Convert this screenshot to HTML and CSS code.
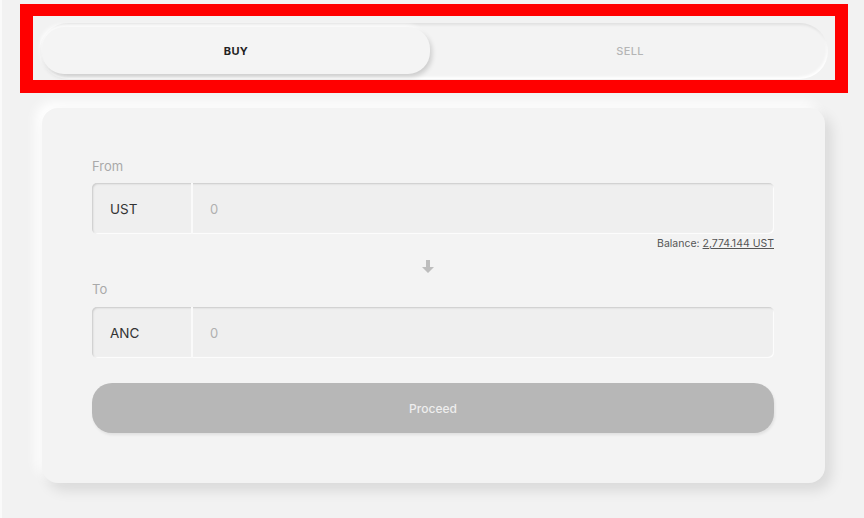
FILE: index.html
```html
<!DOCTYPE html>
<html lang="en">

<head>
    <meta charset="UTF-8">
    <meta name="viewport" content="width=device-width, initial-scale=1.0">
    <title>Buy / Sell ANC</title>
    <link rel="stylesheet" href="styles.css">
</head>

<body>
    <div class="page">
        <div class="tabs">
            <div class="tab active">BUY</div>
            <div class="tab">SELL</div>
        </div>

        <div class="card">
            <div class="label">From</div>
            <div class="field">
                <div class="token">UST</div>
                <div class="amount">0</div>
            </div>
            <div class="balance">Balance: <span class="link">2,774.144 UST</span></div>

            <div class="arrow">
                <svg width="12" height="13" viewBox="0 0 12 13">
                    <path d="M4 0h4v7h4l-6 6-6-6h4z" fill="#bdbdbd" />
                </svg>
            </div>

            <div class="label to">To</div>
            <div class="field">
                <div class="token">ANC</div>
                <div class="amount">0</div>
            </div>

            <div class="proceed">Proceed</div>
        </div>
    </div>

    <!-- annotation frame -->
    <div class="highlight"></div>
</body>

</html>
```

FILE: styles.css
```css
* {
    margin: 0;
    padding: 0;
    box-sizing: border-box;
}

body {
    background-color: #f2f2f2;
    font-family: Inter, "Liberation Sans", Arial, sans-serif;
    color: #333;
    height: 518px;
    overflow: hidden;
    border-left: 2px solid #fafafa;
}

.page {
    width: 788px;
    margin-left: 38px;
    padding-top: 23px;
}

.tabs {
    display: grid;
    grid-template-columns: 1fr 1fr;
    height: 56px;
    padding: 4px 2px 5px;
    border-radius: 28px;
    background-color: #f3f3f3;
    box-shadow: inset 1px 2px 3px rgba(0, 0, 0, 0.08), inset -1px -2px 3px #fff;
}

.tab {
    display: flex;
    align-items: center;
    justify-content: center;
    font-size: 11px;
    font-weight: 500;
    letter-spacing: 0.3px;
    color: #b5b5b5;
}

.tab.active {
    font-weight: 700;
    color: #222;
    margin-right: 4px;
    border-radius: 22px;
    background-color: #f4f4f4;
    box-shadow: 2px 3px 5px rgba(0, 0, 0, 0.16), -2px -2px 4px #fff;
}

.card {
    margin: 29px 3px 0 2px;
    padding: 50px 51px 50px 50px;
    border-radius: 16px;
    background-color: #f3f3f3;
    box-shadow: 6px 7px 14px rgba(0, 0, 0, 0.11), -6px -6px 12px #fff;
}

.label {
    font-size: 13px;
    line-height: 16px;
    color: #a9a9a9;
    margin-bottom: 9px;
}

.label.to {
    margin-top: 8px;
    margin-bottom: 10px;
}

.field {
    display: flex;
    height: 51px;
    border-radius: 5px;
    background-color: #efefef;
    box-shadow: inset 1px 1px 2px rgba(0, 0, 0, 0.16), inset -1px -1px 1px #fff;
}

.token {
    width: 101px;
    display: flex;
    align-items: center;
    padding-left: 18px;
    font-size: 13.5px;
    color: #333;
    border-right: 2px solid #fafafa;
}

.amount {
    flex: 1;
    display: flex;
    align-items: center;
    padding-left: 17px;
    font-size: 13px;
    color: #b0b0b0;
}

.balance {
    margin-top: 3px;
    text-align: right;
    font-size: 10.5px;
    line-height: 14px;
    color: #555;
}

.balance .link {
    text-decoration: underline;
}

.arrow {
    display: flex;
    justify-content: center;
    margin-top: 9px;
    margin-left: -10px;
    height: 13px;
}

.proceed {
    display: flex;
    align-items: center;
    justify-content: center;
    height: 50px;
    margin-top: 25px;
    border-radius: 20px;
    background-color: #b7b7b7;
    color: #eeeeee;
    font-size: 12px;
    font-weight: 500;
    box-shadow: 1px 2px 3px rgba(0, 0, 0, 0.08);
}

.highlight {
    position: absolute;
    left: 20px;
    top: 4px;
    width: 828px;
    height: 89px;
    border: 13px solid #ff0000;
    border-top-width: 12px;
}
```
